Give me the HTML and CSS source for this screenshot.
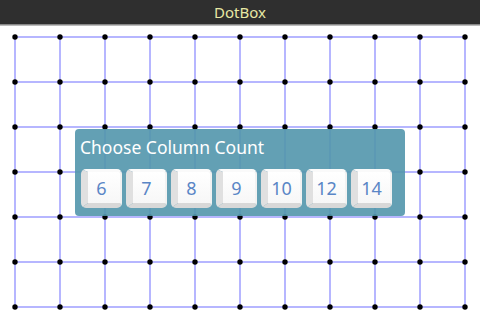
FILE: index.html
```html
<!DOCTYPE html>
<html>
<head>
<meta charset="utf-8">
<title>DotBox</title>
<link rel="stylesheet" href="styles.css">
</head>
<body>
<div class="app">
  <header class="titlebar">DotBox</header>
  <div class="shade"></div>
  <main class="board">
    <svg class="grid" width="480" height="294" viewBox="0 26 480 294" xmlns="http://www.w3.org/2000/svg">
      <defs>
        <filter id="soft" x="-50%" y="-50%" width="200%" height="200%">
          <feGaussianBlur stdDeviation="0.5"/>
        </filter>
      </defs>
      <g stroke="#b6b6ff" stroke-width="2" fill="none">
        <path d="M15 37H465M15 82H465M15 127H465M15 172H465M15 217H465M15 262H465M15 307H465"/>
        <path d="M15 37V307M60 37V307M105 37V307M150 37V307M195 37V307M240 37V307M285 37V307M330 37V307M375 37V307M420 37V307M465 37V307"/>
      </g>
      <g id="dots" fill="#000" filter="url(#soft)"></g>
    </svg>
    <section class="dialog">
      <h1 class="dialog-title">Choose Column Count</h1>
      <div class="choices">
        <button class="choice">6</button>
        <button class="choice">7</button>
        <button class="choice">8</button>
        <button class="choice">9</button>
        <button class="choice">10</button>
        <button class="choice">12</button>
        <button class="choice">14</button>
      </div>
    </section>
  </main>
</div>
<script src="script.js"></script>
</body>
</html>
```

FILE: script.js
```js
(function () {
  var g = document.getElementById('dots');
  var ns = 'http://www.w3.org/2000/svg';
  for (var r = 0; r < 7; r++) {
    for (var c = 0; c < 11; c++) {
      var d = document.createElementNS(ns, 'circle');
      d.setAttribute('cx', 15 + c * 45);
      d.setAttribute('cy', 37 + r * 45);
      d.setAttribute('r', '2.7');
      g.appendChild(d);
    }
  }
})();
```

FILE: styles.css
```css
html, body {
  margin: 0;
  padding: 0;
  background: #fff;
}
.app {
  width: 480px;
  height: 320px;
  display: flex;
  flex-direction: column;
  overflow: hidden;
  font-family: "Noto Sans", "Open Sans", sans-serif;
}
.titlebar {
  height: 24px;
  background: #2f2f2f;
  color: #e8e8a4;
  font-size: 15px;
  line-height: 24px;
  text-align: center;
}
.shade {
  height: 2px;
  background: linear-gradient(#6e6e6e, #d6d6d6);
}
.board {
  position: relative;
  flex: 1;
}
.grid {
  display: block;
}
.dialog {
  position: absolute;
  left: 75px;
  top: 103px;
  width: 330px;
  box-sizing: border-box;
  padding: 7px 0 8px 6px;
  background: rgba(82, 150, 172, 0.9);
  border-radius: 4px;
}
.dialog-title {
  margin: 0 0 0 -1px;
  font-weight: normal;
  font-size: 17.5px;
  line-height: 22px;
  color: #fff;
}
.choices {
  display: flex;
  gap: 4px;
  margin-top: 11px;
}
.choice {
  width: 41px;
  height: 39px;
  box-sizing: border-box;
  padding: 2px 5px 0 0;
  border-style: solid;
  border-width: 3px 2px 5px 7px;
  border-color: #fafafa #f2f2f2 #d8d8d8 #e0e0e0;
  border-radius: 5px;
  background: linear-gradient(#ffffff, #f7f7f7);
  color: #5a86c6;
  font-family: "Noto Sans", "Open Sans", sans-serif;
  font-size: 18px;
  line-height: 29px;
  text-align: center;
}
```
